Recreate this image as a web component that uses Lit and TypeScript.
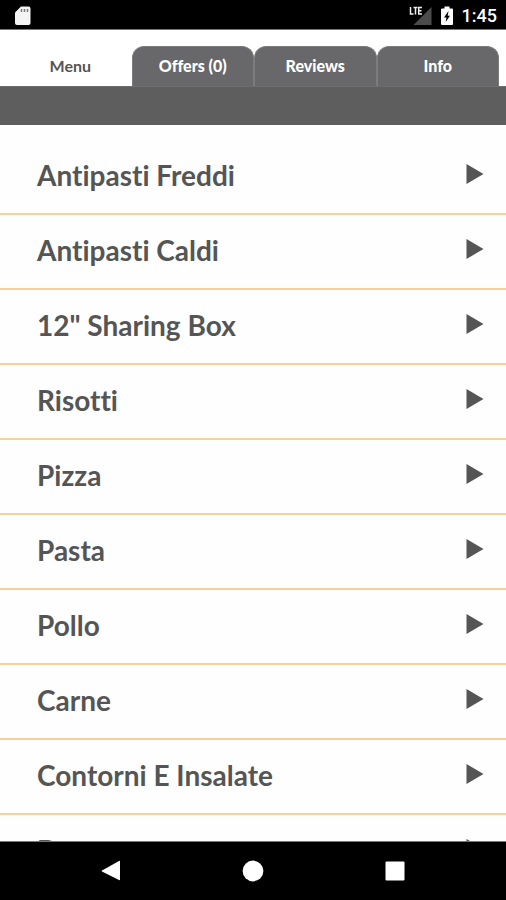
import { LitElement, html, css, svg } from "lit";
import { customElement, property, state } from "lit/decorators.js";
import { classMap } from "lit/directives/class-map.js";

@customElement("status-bar")
class StatusBar extends LitElement {
  static styles = css`
    :host {
      display: flex;
      align-items: center;
      flex: none;
      height: 30px;
      box-sizing: border-box;
      padding: 2px 9px 0 15px;
      border-bottom: 1px solid #777;
      background: #000;
      color: #fff;
      font: 500 18px/24px Roboto, sans-serif;
    }
    svg { display: block; }
    .card { margin-right: auto; }
    .battery { margin: 0 9px 0 9px; }
  `;
  render() {
    return html`
      <svg class="card" width="16" height="20" viewBox="0 0 16 20" role="img" aria-label="SD card">
        <path d="M6 0.5h7.5a2 2 0 0 1 2 2v14.500a2 2 0 0 1-2 2h-11.500a2 2 0 0 1-2-2V6.500z" fill="#f4f4f4" />
        <path d="M6.500 3v3M9.500 3v3M12.500 3v3" stroke="#777" stroke-width="1.500" />
      </svg>
      <svg width="24" height="20" viewBox="0 0 24 20" role="img" aria-label="LTE signal">
        <path d="M23.500 1v18H5.500z" fill="#4c4c4c" />
        <path d="M2.500 1v7h3M5.500 1.500h4M7.500 1.500v7M14 1.500h-3.300v6.500H14M10.700 4.700H13.500" fill="none" stroke="#eee" stroke-width="1.500" />
      </svg>
      <svg class="battery" width="12" height="20" viewBox="0 0 12 20" role="img" aria-label="Battery charging">
        <path d="M3.500 0.500h5v2h2.500a1 1 0 0 1 1 1v14.500a1 1 0 0 1-1 1H1a1 1 0 0 1-1-1V3.500a1 1 0 0 1 1-1h2.500z" fill="#fff" />
        <path d="M7.500 5L3 11.500h2.500L4.700 16 9 9.700H6.700z" fill="#000" />
      </svg>
      <span>1:45</span>
    `;
  }
}

@customElement("tab-strip")
class TabStrip extends LitElement {
  @property({ type: Array }) tabs: string[] = [];
  @state() private active = 0;

  static styles = css`
    :host { display: block; flex: none; background: #fff; }
    .tabs {
      display: grid;
      grid-template-columns: repeat(4, 1fr);
      padding: 16px 7px 0 9px;
      border-bottom: 1px solid #6e6e6e;
    }
    .tab {
      height: 40px;
      margin: 0;
      padding: 0 0 2px;
      border: 1px solid #7c7c7c;
      border-bottom: 0;
      border-radius: 12px 12px 0 0;
      background: #68686a;
      color: #fff;
      font: 900 16px/20px Lato, sans-serif;
      font-variant-ligatures: none;
      text-align: center;
    }
    .tab.active {
      border-color: transparent;
      background: #fff;
      color: #555;
      font-weight: 700;
    }
    .band { height: 38px; background: #5e5e5e; }
  `;
  render() {
    return html`
      <div class="tabs" role="tablist">
        ${this.tabs.map(
          (t, i) => html`<button
            role="tab"
            aria-selected=${i === this.active}
            class=${classMap({ tab: true, active: i === this.active })}
            @click=${() => (this.active = i)}
          >${t}</button>`
        )}
      </div>
      <div class="band"></div>
    `;
  }
}

@customElement("category-list")
class CategoryList extends LitElement {
  @property({ type: Array }) items: string[] = [];

  static styles = css`
    :host {
      display: block;
      flex: 1;
      min-height: 0;
      overflow-y: auto;
      scrollbar-width: none;
      background: #fefefe;
    }
    .list { margin: 0; padding: 15px 0 0; list-style: none; }
    .row {
      display: flex;
      align-items: center;
      justify-content: space-between;
      width: 100%;
      height: 75px;
      margin: 0;
      padding: 0 22px 4px 37px;
      border: 0;
      border-bottom: 2px solid #f7cf98;
      background: none;
      color: #555;
      font: 700 28px/34px Lato, sans-serif;
      font-variant-ligatures: none;
      text-align: left;
    }
    .arrow { display: block; margin-bottom: 2px; }
  `;
  render() {
    return html`<ul class="list">
      ${this.items.map(
        (name) => html`<li>
          <button class="row">
            <span>${name}</span>
            <svg class="arrow" width="18" height="20" viewBox="0 0 18 20" aria-hidden="true">
              <path d="M0.500 0L17.500 10 0.500 20z" fill="#555" />
            </svg>
          </button>
        </li>`
      )}
    </ul>`;
  }
}

@customElement("nav-bar")
class NavBar extends LitElement {
  static styles = css`
    :host {
      display: flex;
      justify-content: center;
      align-items: center;
      flex: none;
      gap: 94px;
      height: 59px;
      box-sizing: border-box;
      border-top: 1px solid #777;
      background: #000;
    }
    .key {
      display: grid;
      place-items: center;
      width: 48px;
      height: 48px;
      padding: 0;
      border: 0;
      background: none;
    }
  `;
  private key(label: string, shape: unknown) {
    return html`<button class="key" aria-label=${label}>
      <svg width="22" height="22" viewBox="0 0 22 22" fill="#fff">${shape}</svg>
    </button>`;
  }
  render() {
    return html`
      ${this.key("Back", svg`<path d="M2 10.500L19 1q1-0.500 1 0.500v18q0 1-1 0.500L2 11.500q-1-0.500 0-1z" />`)}
      ${this.key("Home", svg`<circle cx="11" cy="11" r="10.400" />`)}
      ${this.key("Recent apps", svg`<rect x="1.500" y="1.500" width="19" height="19" rx="1" />`)}
    `;
  }
}

@customElement("app-root")
class AppRoot extends LitElement {
  static styles = css`
    :host {
      display: flex;
      flex-direction: column;
      height: 100vh;
      overflow: hidden;
    }
  `;
  private tabs = ["Menu", "Offers (0)", "Reviews", "Info"];
  private categories = [
    "Antipasti Freddi",
    "Antipasti Caldi",
    '12" Sharing Box',
    "Risotti",
    "Pizza",
    "Pasta",
    "Pollo",
    "Carne",
    "Contorni E Insalate",
    "Desserts",
  ];
  render() {
    return html`
      <status-bar></status-bar>
      <tab-strip .tabs=${this.tabs}></tab-strip>
      <category-list .items=${this.categories}></category-list>
      <nav-bar></nav-bar>
    `;
  }
}
